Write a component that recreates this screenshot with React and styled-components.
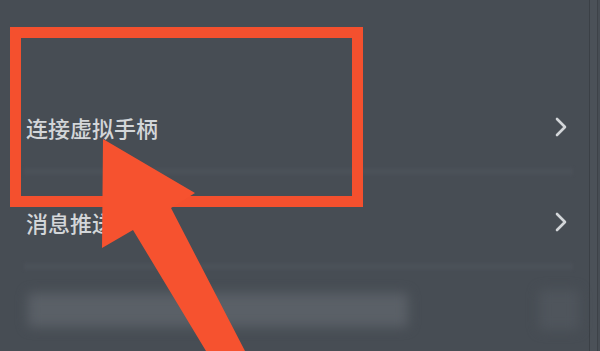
import React from 'react';
import styled, { createGlobalStyle } from 'styled-components';

const GlobalStyle = createGlobalStyle`
  html, body {
    margin: 0;
    padding: 0;
    background: #474d54;
    width: 600px;
    height: 351px;
    overflow: hidden;
  }
  #root {
    height: 100%;
  }
`;

const Screen = styled.div`
  position: relative;
  width: 600px;
  height: 351px;
  background: #474d54;
  overflow: hidden;
  display: flex;
  font-family: "Noto Sans CJK SC", "Noto Sans", sans-serif;
`;

const List = styled.div`
  flex: 1;
  display: flex;
  flex-direction: column;
  padding-top: 80px;
`;

const EdgeStrip = styled.div`
  width: 7px;
  border-left: 1px solid #3b4046;
  border-right: 1px solid #3d4248;
  background: #4b5158;
  margin-right: 2px;
`;

const Row = styled.div`
  height: 95px;
  box-sizing: border-box;
  display: flex;
  align-items: center;
  justify-content: space-between;
  padding: 0 20px 0 26px;
  position: relative;
  &::after {
    content: "";
    position: absolute;
    left: 24px;
    right: 16px;
    bottom: 0;
    height: 7px;
    background: #4b5158;
    filter: blur(1.5px);
  }
`;

const Label = styled.span`
  color: #d3d6d9;
  font-size: 22px;
  font-weight: 500;
  line-height: 1;
  margin-top: -2px;
`;

const Chevron = styled.svg`
  width: 16px;
  height: 24px;
  margin-top: -2px;
`;

const BlurRow = styled.div`
  height: 80px;
  display: flex;
  align-items: center;
  justify-content: space-between;
  padding: 0 10px 0 28px;
`;

const Blurred = styled.div`
  width: ${p => p.$w}px;
  height: ${p => p.$h}px;
  background: ${p => p.$c};
  border-radius: 4px;
  filter: blur(6px);
`;

const Highlight = styled.div`
  position: absolute;
  left: 10px;
  top: 27px;
  width: 353px;
  height: 180px;
  box-sizing: border-box;
  border: 11px solid #f4502e;
  pointer-events: none;
`;

const ArrowLayer = styled.svg`
  position: absolute;
  left: 0;
  top: 0;
  width: 600px;
  height: 351px;
  pointer-events: none;
`;

const ChevronIcon = () => (
  <Chevron viewBox="0 0 16 24">
    <path d="M4 4 L12 12 L4 20" fill="none" stroke="#d3d6d9" strokeWidth="2.6" strokeLinecap="round" strokeLinejoin="round" />
  </Chevron>
);

const rows = ['连接虚拟手柄', '消息推送'];

export default function App() {
  return (
    <>
      <GlobalStyle />
      <Screen>
        <List>
          {rows.map(r => (
            <Row key={r}>
              <Label>{r}</Label>
              <ChevronIcon />
            </Row>
          ))}
          <BlurRow>
            <Blurred $w={380} $h={34} $c="#5a6067" />
            <Blurred $w={40} $h={40} $c="#4f555c" />
          </BlurRow>
        </List>
        <EdgeStrip />
        <Highlight />
        <ArrowLayer viewBox="0 0 600 351">
          <polygon
            points="103,139 195,193 171,208 245,351 206,351 133,230 102,248"
            fill="#f6522f"
          />
        </ArrowLayer>
      </Screen>
    </>
  );
}
